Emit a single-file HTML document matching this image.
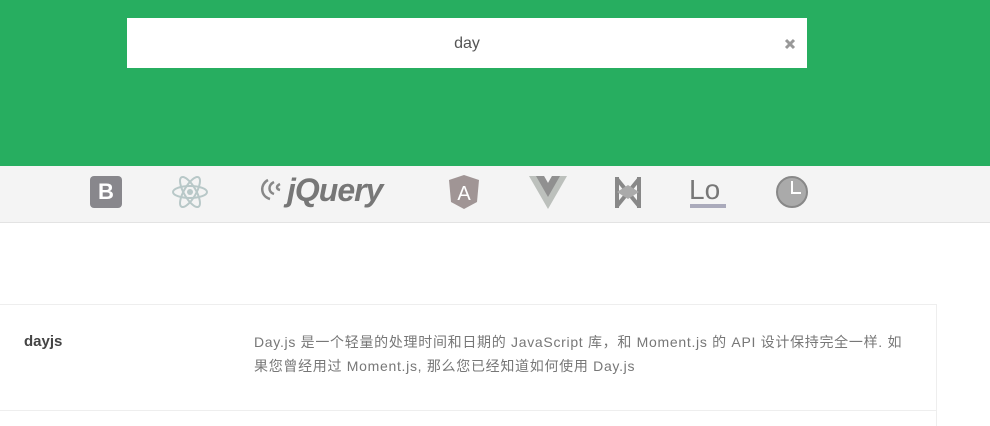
<!DOCTYPE html>
<html><head><meta charset="utf-8"><style>
*{margin:0;padding:0;box-sizing:border-box}
body{width:990px;height:426px;overflow:hidden;background:#fff;font-family:"Liberation Sans","Noto Sans CJK SC",sans-serif}
.top{position:absolute;left:0;top:0;width:990px;height:166px;background:#27ae60}
.search{position:absolute;left:127px;top:18px;width:680px;height:50px;background:#fff}
.search .q{position:absolute;left:0;right:0;top:17px;text-align:center;font-size:16px;color:#555}
.bar{position:absolute;left:0;top:166px;width:990px;height:57px;background:#f4f4f4;border-bottom:1px solid #e3e3e3}
.ic{position:absolute}
.card{position:absolute;left:-1px;top:304px;width:938px;height:107px;border:1px solid #eee;border-left:none}
.name{position:absolute;left:24px;top:333px;font-size:15px;font-weight:bold;color:#444}
.desc{position:absolute;left:254px;top:330px;width:700px;font-size:14px;line-height:24px;color:#777;white-space:nowrap;letter-spacing:0.7px}
.rb{position:absolute;left:936px;top:409px;height:17px;border-left:1px solid #eee}
</style></head><body>
<div class="top"><div class="search"><div class="q">day</div>
<svg class="ic" style="left:657px;top:20px" width="12" height="12" viewBox="0 0 12 12"><path d="M2 2L10 10M10 2L2 10" stroke="#999" stroke-width="3"/></svg></div></div>
<div class="bar">
<div class="ic" style="left:90px;top:10px;width:32px;height:32px;background:#88878c;border-radius:4px;color:#fff;font-weight:bold;font-size:22px;text-align:center;line-height:32px">B</div>
<svg class="ic" style="left:171px;top:9px" width="38" height="34" viewBox="0 0 38 34"><g fill="none" stroke="#b8c8c8" stroke-width="2"><ellipse cx="19" cy="17" rx="17" ry="6"/><ellipse cx="19" cy="17" rx="17" ry="6" transform="rotate(60 19 17)"/><ellipse cx="19" cy="17" rx="17" ry="6" transform="rotate(-60 19 17)"/></g><circle cx="19" cy="17" r="3" fill="#b8c8c8"/></svg>
<svg class="ic" style="left:258px;top:12px" width="28" height="26" viewBox="0 0 28 26"><g fill="none" stroke="#888" stroke-width="2.5"><path d="M10 2C2 6 2 18 12 21"/><path d="M16 4C10 7 10 14 16 16"/><path d="M22 6C18 8 18 11 22 12"/></g></svg>
<div class="ic" style="left:287px;top:6px;font-size:32px;font-weight:bold;font-style:italic;color:#777;letter-spacing:-1px">jQuery</div>
<svg class="ic" style="left:449px;top:9px" width="30" height="34" viewBox="0 0 30 34"><path d="M15 0L30 5 28 27 15 34 2 27 0 5Z" fill="#a09595"/><text x="15" y="25" font-size="20" fill="#fff" text-anchor="middle" font-family="Liberation Sans">A</text></svg>
<svg class="ic" style="left:529px;top:10px" width="38" height="33" viewBox="0 0 38 33"><path d="M0 0H15L19 7 23 0H38L19 33Z" fill="#bcc0bc"/><path d="M7 0H15L19 7 23 0H31L19 21Z" fill="#909090"/></svg>
<svg class="ic" style="left:615px;top:10px" width="26" height="33" viewBox="0 0 26 33"><path d="M2 1V32M24 1V32M2 3L24 30M24 3L2 30" stroke="#888" stroke-width="4" fill="none"/><path d="M2 16L13 9 24 16 13 23Z" fill="#aaa"/></svg>
<div class="ic" style="left:689px;top:8px;font-size:28px;color:#777">Lo</div>
<div class="ic" style="left:690px;top:38px;width:36px;height:4px;background:#aab"></div>
<svg class="ic" style="left:775px;top:9px" width="34" height="34" viewBox="0 0 34 34"><circle cx="17" cy="17" r="15" fill="#aaa" stroke="#888" stroke-width="2"/><path d="M17 6V18H26" stroke="#fff" stroke-width="2" fill="none"/></svg>
</div>
<div class="card"></div>
<div class="name">dayjs</div>
<div class="desc">Day.js 是一个轻量的处理时间和日期的 JavaScript 库，和 Moment.js 的 API 设计保持完全一样. 如<br>果您曾经用过 Moment.js, 那么您已经知道如何使用 Day.js</div>
<div class="rb"></div>
</body></html>
